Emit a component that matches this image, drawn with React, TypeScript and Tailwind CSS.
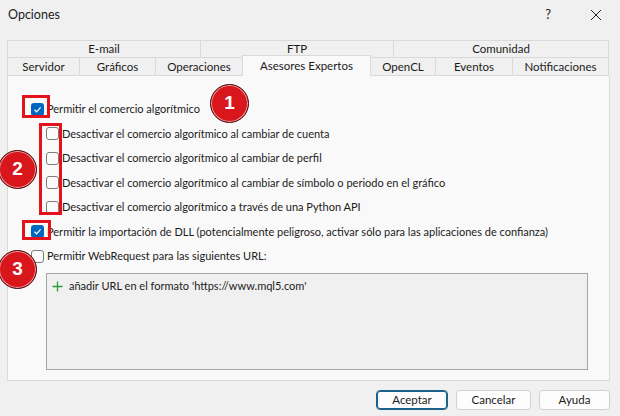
import React from "react";

function Check({ checked }: { checked?: boolean }) {
  if (checked) {
    return (
      <div className="w-[13px] h-[13px] rounded-[3px] bg-[#0067c0] flex items-center justify-center shrink-0">
        <svg width="9" height="9" viewBox="0 0 9 9">
          <path d="M1.5 4.8 L3.6 6.8 L7.6 2.3" fill="none" stroke="white" strokeWidth="1.2" />
        </svg>
      </div>
    );
  }
  return <div className="w-[13px] h-[13px] rounded-[3px] border border-[#7d7d7d] bg-[#fbfbfb] shrink-0" />;
}

function Row({ checked, sub, label }: { checked?: boolean; sub?: boolean; label: string }) {
  return (
    <div className={`flex items-center h-[24.5px] ${sub ? "pl-[38px]" : "pl-[23px]"}`}>
      <Check checked={checked} />
      <span className="ml-[3px] whitespace-nowrap text-[11px]">{label}</span>
    </div>
  );
}

function Badge({ n, cls }: { n: string; cls: string }) {
  return (
    <div
      className={`absolute w-[39px] h-[39px] rounded-full bg-[#d9161c] border border-[#4a0a0a] flex items-center justify-center text-white font-bold text-[19px] font-['Liberation_Sans',sans-serif] shadow-[inset_0_0_0_1px_rgba(255,255,255,0.6)] ${cls}`}
    >
      {n}
    </div>
  );
}

export default function App() {
  return (
    <div className="relative w-[620px] h-[416px] bg-[#f0f0f0] overflow-hidden text-[#1b1b1b] text-[11.5px] font-['Lato',sans-serif]">
      {/* title bar */}
      <div className="h-[30px] flex items-center">
        <span className="pl-[8px] text-[12.5px]">Opciones</span>
        <div className="ml-auto flex items-center">
          <span className="text-[13px] mr-[39px]">?</span>
          <svg width="12" height="12" viewBox="0 0 12 12" className="mr-[18px]">
            <path d="M1 1 L11 11 M11 1 L1 11" stroke="#222" strokeWidth="1" />
          </svg>
        </div>
      </div>

      {/* tabs */}
      <div className="mt-[10px] ml-[7px] w-[602px]">
        <div className="flex h-[17px] border-t border-l border-r border-[#dadada]">
          <div className="w-[193px] flex items-center justify-center border-r border-[#dadada]">E-mail</div>
          <div className="w-[193px] flex items-center justify-center border-r border-[#dadada]">FTP</div>
          <div className="flex-1 flex items-center justify-center">Comunidad</div>
        </div>
        <div className="flex h-[18px] items-end border-t border-l border-r border-[#dadada]">
          <div className="w-[72px] h-full flex items-center justify-center border-r border-[#dadada]">Servidor</div>
          <div className="w-[76px] h-full flex items-center justify-center border-r border-[#dadada]">Gráficos</div>
          <div className="w-[86px] h-full flex items-center justify-center">Operaciones</div>
          <div className="relative z-10 w-[129px] h-[21px] -mb-[1px] flex items-start pt-[1px] justify-center bg-[#f9f9f9] border-t border-l border-r border-[#dadada]">
            Asesores Expertos
          </div>
          <div className="w-[65px] h-full flex items-center justify-center border-r border-[#dadada]">OpenCL</div>
          <div className="w-[77px] h-full flex items-center justify-center border-r border-[#dadada]">Eventos</div>
          <div className="flex-1 h-full flex items-center justify-center">Notificaciones</div>
        </div>
      </div>

      {/* panel */}
      <div className="ml-[7px] w-[603px] h-[306px] bg-[#f9f9f9] border border-[#dadada] pt-[21px]">
        <Row checked label="Permitir el comercio algorítmico" />
        <Row sub label="Desactivar el comercio algorítmico al cambiar de cuenta" />
        <Row sub label="Desactivar el comercio algorítmico al cambiar de perfil" />
        <Row sub label="Desactivar el comercio algorítmico al cambiar de símbolo o periodo en el gráfico" />
        <Row sub label="Desactivar el comercio algorítmico a través de una Python API" />
        <Row checked label="Permitir la importación de DLL (potencialmente peligroso, activar sólo para las aplicaciones de confianza)" />
        <Row label="Permitir WebRequest para las siguientes URL:" />
        <div className="ml-[38px] mt-[4.5px] w-[542px] h-[97px] bg-[#f0f0f0] border border-[#a6a6a6] pt-[4px] pl-[5px]">
          <div className="flex items-center text-[11px]">
            <svg width="11" height="11" viewBox="0 0 11 11" className="mr-[6px]">
              <path d="M5.5 0.5 V10.5 M0.5 5.5 H10.5" stroke="#2e9b3a" strokeWidth="1.3" />
            </svg>
            <span>añadir URL en el formato 'https://www.mql5.com'</span>
          </div>
        </div>
      </div>

      {/* buttons */}
      <div className="flex justify-end gap-[8px] mt-[9px] mr-[10px]">
        <button className="w-[72px] h-[20px] rounded-[4px] bg-[#fdfdfd] border border-[#1f5f8b] shadow-[inset_0_0_0_1px_#1f5f8b]">Aceptar</button>
        <button className="w-[75px] h-[20px] rounded-[4px] bg-[#fdfdfd] border border-[#d0d0d0]">Cancelar</button>
        <button className="w-[71px] h-[20px] rounded-[4px] bg-[#fdfdfd] border border-[#d0d0d0]">Ayuda</button>
      </div>

      {/* annotations */}
      <div className="absolute left-[22px] top-[95px] w-[28px] h-[23px] border-[3px] border-[#e3121b]" />
      <div className="absolute left-[39px] top-[123px] w-[23px] h-[92px] border-[3px] border-[#e3121b]" />
      <div className="absolute left-[22px] top-[220px] w-[29px] h-[20px] border-[3px] border-[#e3121b]" />
      <Badge n="1" cls="left-[210px] top-[84px]" />
      <Badge n="2" cls="left-[-2px] top-[150px]" />
      <Badge n="3" cls="left-[-2px] top-[250px]" />
    </div>
  );
}
